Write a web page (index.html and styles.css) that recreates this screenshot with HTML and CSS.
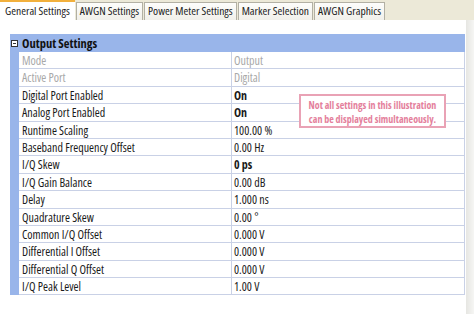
FILE: index.html
```html
<!DOCTYPE html>
<html lang="en">

<head>
  <meta charset="UTF-8">
  <meta name="viewport" content="width=device-width, initial-scale=1.0">
  <title>Output Settings</title>
  <link rel="stylesheet" href="styles.css">
</head>

<body>
  <!--tab bar-->
  <div class="tabs">
    <div class="tab active">General Settings</div>
    <div class="tab">AWGN Settings</div>
    <div class="tab">Power Meter Settings</div>
    <div class="tab">Marker Selection</div>
    <div class="tab">AWGN Graphics</div>
  </div>

  <div class="page">
    <div class="panel">
      <div class="head">
        <svg class="toggle" width="7" height="7" viewBox="0 0 7 7">
          <rect x="0.5" y="0.5" width="6" height="6" fill="#fff" stroke="#333" />
          <line x1="2" y1="3.5" x2="5" y2="3.5" stroke="#333" />
        </svg>
        <span>Output Settings</span>
      </div>

      <div class="rows">
        <div class="row off"><div class="name">Mode</div><div class="val">Output</div></div>
        <div class="row off"><div class="name">Active Port</div><div class="val">Digital</div></div>
        <div class="row"><div class="name">Digital Port Enabled</div><div class="val bold">On</div></div>
        <div class="row"><div class="name">Analog Port Enabled</div><div class="val bold">On</div></div>
        <div class="row"><div class="name">Runtime Scaling</div><div class="val">100.00 %</div></div>
        <div class="row"><div class="name">Baseband Frequency Offset</div><div class="val">0.00 Hz</div></div>
        <div class="row"><div class="name">I/Q Skew</div><div class="val bold">0 ps</div></div>
        <div class="row"><div class="name">I/Q Gain Balance</div><div class="val">0.00 dB</div></div>
        <div class="row"><div class="name">Delay</div><div class="val">1.000 ns</div></div>
        <div class="row"><div class="name">Quadrature Skew</div><div class="val">0.00 °</div></div>
        <div class="row"><div class="name">Common I/Q Offset</div><div class="val">0.000 V</div></div>
        <div class="row"><div class="name">Differential I Offset</div><div class="val">0.000 V</div></div>
        <div class="row"><div class="name">Differential Q Offset</div><div class="val">0.000 V</div></div>
        <div class="row"><div class="name">I/Q Peak Level</div><div class="val">1.00 V</div></div>
      </div>

      <!--note over the table-->
      <div class="note">Not all settings in this illustration<br>can be displayed simultaneously.</div>
    </div>
    <div class="edge"></div>
  </div>
</body>

</html>
```

FILE: styles.css
```css
body {
  margin: 0;
  width: 474px;
  height: 314px;
  overflow: hidden;
  background: #fff;
  font-family: "Open Sans", sans-serif;
  font-stretch: 75%;
  color: #1a1a1a;
}

/*tab bar*/
.tabs {
  display: flex;
  align-items: flex-end;
  height: 20px;
  background: #ece9d8;
}

.tab {
  height: 18px;
  box-sizing: border-box;
  margin-left: 1px;
  padding: 0 3px;
  border: 1px solid #b2b0a4;
  border-bottom: none;
  background: linear-gradient(#fdfdfb, #f1f0ea);
  font-size: 11.5px;
  line-height: 16px;
  color: #222;
  white-space: nowrap;
}

.tab.active {
  height: 20px;
  margin-left: 0;
  padding: 0 5px;
  border: none;
  border-top: 2px solid #f2b03c;
  background: #fff;
  line-height: 18px;
}

/*content*/
.page {
  display: flex;
  height: 294px;
  padding-top: 14px;
  padding-left: 10px;
  box-sizing: border-box;
}

.panel {
  position: relative;
  width: 455px;
}

.head {
  display: flex;
  align-items: center;
  gap: 4px;
  height: 18px;
  padding-left: 1px;
  background: #99b5ea;
  font-size: 12.5px;
  font-weight: bold;
  color: #111;
}

.toggle {
  flex: none;
}

.rows {
  border-left: 9px solid #99b5ea;
}

.row {
  display: flex;
  height: 17.4px;
  box-sizing: border-box;
  border-bottom: 1px solid #c9d1e6;
  font-size: 12px;
  line-height: 17px;
}

.name {
  width: 213px;
  flex: none;
  padding-left: 3px;
  box-sizing: border-box;
  border-right: 1px solid #c9d1e6;
}

.val {
  flex: 1;
  padding-left: 2px;
  border-right: 1px solid #c9d1e6;
}

.off .name,
.off .val {
  color: #a8a8a8;
}

.bold {
  font-weight: bold;
}

.note {
  position: absolute;
  left: 289px;
  top: 60px;
  width: 147px;
  height: 34px;
  box-sizing: border-box;
  border: 2px solid #e9a2b5;
  background: #fff;
  font-size: 10px;
  font-weight: bold;
  line-height: 14px;
  padding-top: 2px;
  text-align: center;
  white-space: nowrap;
  color: #e47f9c;
}

.edge {
  width: 8px;
  margin-left: 1px;
  margin-top: -14px;
  height: 294px;
  background: linear-gradient(90deg, #e6e6e2, #f6f6f4);
}
```
